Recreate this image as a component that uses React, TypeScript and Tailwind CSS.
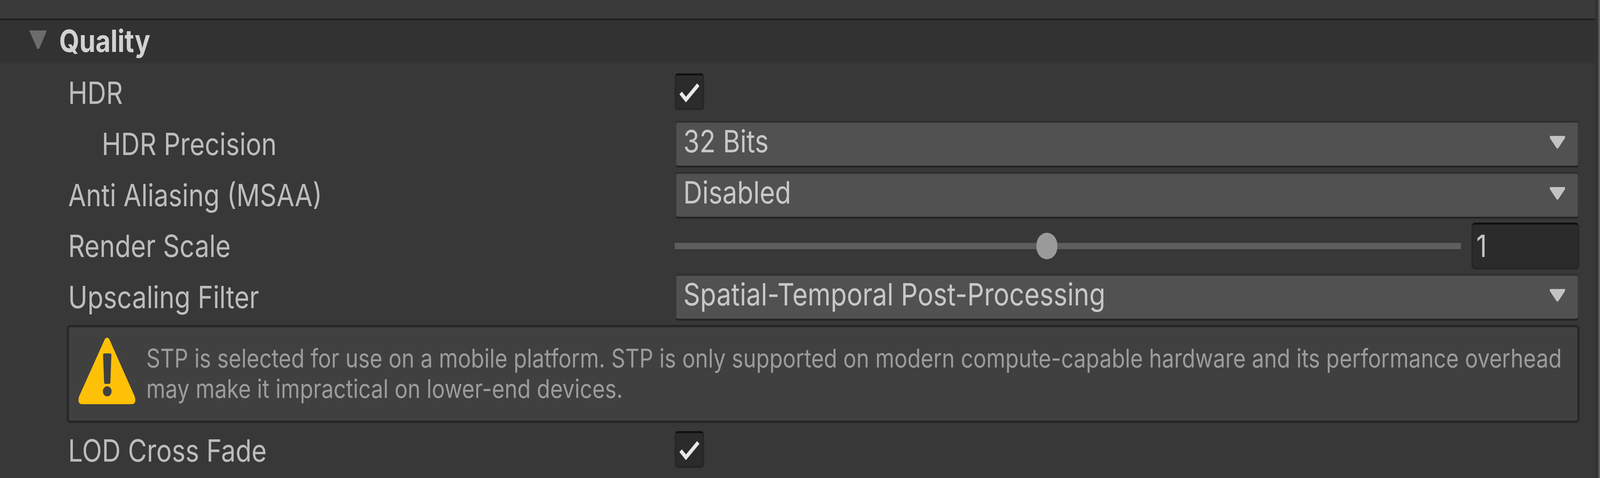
import { ReactNode } from "react";

function Caret() {
  return (
    <svg width="46" height="32" viewBox="0 0 46 32" className="shrink-0">
      <path d="M0 0H46V5L25 32H21L0 5Z" fill="#c2c2c2" />
    </svg>
  );
}

function Dropdown({ value }: { value: string }) {
  return (
    <div className="flex h-full min-w-0 flex-1 items-center justify-between rounded-[10px] border-x-[5px] border-t-[5px] border-b-[5px] border-x-[#383838] border-t-[#303030] border-b-[#242424] bg-[#515151] pr-[38px] pl-[21px]">
      <span className="-mt-[14px] text-[79px] text-[#c8c8c8]">{value}</span>
      <div className="-mt-[10px] flex">
        <Caret />
      </div>
    </div>
  );
}

function Checkbox() {
  return (
    <div className="-mt-[6px] h-[94px] w-[89px] overflow-hidden rounded-[10px] border-x-[5px] border-t-[5px] border-b-[5px] border-x-[#262626] border-t-[#0f0f0f] border-b-[#262626] bg-[#2b2b2b]">
      <svg width="79" height="84" viewBox="0 0 79 84">
        <path d="M13 45L29 62L66 24" fill="none" stroke="#e8e8e8" strokeWidth="10" />
      </svg>
    </div>
  );
}

function Row({
  label,
  indent,
  children,
}: {
  label: string;
  indent?: boolean;
  children: ReactNode;
}) {
  return (
    <div className="flex h-[120px] items-center">
      <div className={indent ? "w-[1828px] shrink-0 pl-[105px] text-[#bdbdbd]" : "w-[1828px] shrink-0 pl-[4px] text-[#bdbdbd]"}>
        {label}
      </div>
      {children}
    </div>
  );
}

function Slider() {
  return (
    <div className="flex h-full min-w-0 flex-1 items-center gap-[31px]">
      <div className="relative h-[16px] flex-1 bg-[#5e5e5e]">
        <div className="absolute top-[-26px] left-[46%] h-[68px] w-[63px] rounded-full bg-[#9a9a9a]" />
      </div>
      <div className="flex h-full w-[325px] shrink-0 items-center rounded-[12px] border-x-[5px] border-t-[5px] border-b-[5px] border-x-[#262626] border-t-[#0f0f0f] border-b-[#262626] bg-[#2b2b2b] pl-[10px] text-[#c4c4c4]">
        1
      </div>
    </div>
  );
}

function WarningIcon() {
  return (
    <svg width="173" height="172" viewBox="0 0 173 172" className="mb-[16px] shrink-0">
      <path
        fillRule="evenodd"
        fill="#ffc107"
        d="M80 6Q87 -3 94 6L170 152Q177 172 160 172H13Q-4 172 3 152ZM75 46Q75 42 79 42H96Q100 42 100 46L97 116Q97 120 93 120H82Q78 120 78 116ZM87.5 126A13 13 0 1 0 87.5 152A13 13 0 1 0 87.5 126Z"
      />
    </svg>
  );
}

export default function App() {
  // the panel is 4812 wide, the window can come out narrower: fit it across
  const fitX = Math.min(1, window.innerWidth / 4812);

  return (
    <div className="h-[1224px] w-full overflow-hidden bg-[#383838]">
      <div
        className="flex h-[1224px] w-[4812px] origin-top-left bg-[#383838] text-[78px] leading-none [font-family:Inter,sans-serif]"
        style={{ transform: `scaleX(${fitX})` }}
      >
        <div className="flex min-w-0 flex-1 flex-col">
          <div className="h-[47px] bg-[#3a3a3a]" />
          <div className="h-[5px] bg-[#232323]" />
          <div className="flex h-[110px] items-center bg-[#323232] pl-[88px]">
            <svg width="53" height="47" viewBox="0 0 53 47" className="mb-[12px]">
              <path d="M0 0H53L30 47H24Z" fill="#6c6c6c" />
            </svg>
            <span className="ml-[37px] -mt-[4px] font-bold text-[#d2d2d2]">Quality</span>
          </div>
          <div className="flex flex-col gap-[10.67px] pt-[16.33px] pr-[47px] pl-[201px]">
            <Row label="HDR">
              <Checkbox />
            </Row>
            <Row label="HDR Precision" indent>
              <Dropdown value="32 Bits" />
            </Row>
            <Row label="Anti Aliasing (MSAA)">
              <Dropdown value="Disabled" />
            </Row>
            <Row label="Render Scale">
              <Slider />
            </Row>
            <Row label="Upscaling Filter">
              <Dropdown value="Spatial-Temporal Post-Processing" />
            </Row>
            <div className="flex h-[251.33px] items-center gap-[32px] rounded-[10px] border-[6px] border-[#262626] bg-[#404040] pl-[28px] text-[65.4px] leading-[78px] text-[#9c9c9c]">
              <WarningIcon />
              <p>
                STP is selected for use on a mobile platform. STP is only supported on modern compute-capable hardware and its performance overhead
                <br />
                may make it impractical on lower-end devices.
              </p>
            </div>
            <Row label="LOD Cross Fade">
              <Checkbox />
            </Row>
          </div>
        </div>
        <div className="w-[10px] shrink-0 bg-[#333333]" />
        <div className="w-[5px] shrink-0 bg-[#5f5f5f]" />
      </div>
    </div>
  );
}
